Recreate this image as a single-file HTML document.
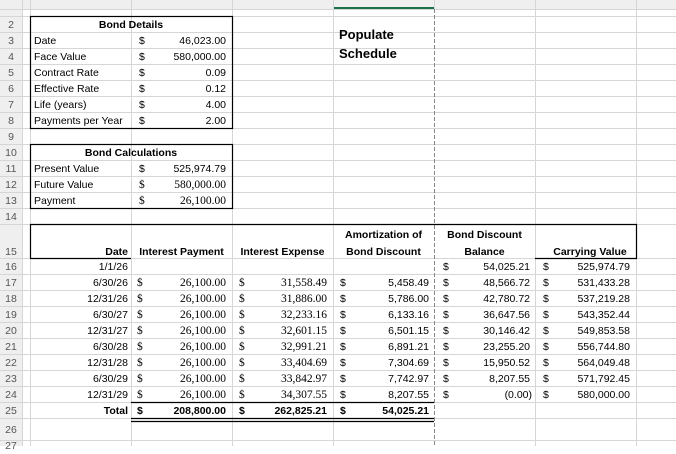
<!DOCTYPE html>
<html><head><meta charset="utf-8"><style>
body{margin:0;width:676px;height:446px;overflow:hidden;background:#fff;font-family:"Liberation Sans",sans-serif;font-size:10.5px;color:#000;position:relative}
.c{position:absolute;height:16px;line-height:16px;white-space:nowrap}
.r{text-align:right}.m{text-align:center}.b{font-weight:bold}
.s{font-family:"Liberation Serif",serif;font-size:11.5px}
.rn{position:absolute;left:0;width:22px;text-align:center;height:16px;line-height:16px;color:#555;font-size:10.5px}
</style></head><body>
<svg width="676" height="446" style="position:absolute;left:0;top:0">
<rect x="0" y="0" width="676" height="9" fill="#efefef"/>
<rect x="0" y="0" width="22" height="446" fill="#efefef"/>
<rect x="333" y="7" width="101" height="2" fill="#1e7145"/>
<g stroke="#d6d6d6" stroke-width="1">
<line x1="0" y1="9.5" x2="676" y2="9.5"/>
<line x1="0" y1="16.5" x2="676" y2="16.5"/>
<line x1="0" y1="32.5" x2="676" y2="32.5"/><line x1="0" y1="48.5" x2="676" y2="48.5"/><line x1="0" y1="64.5" x2="676" y2="64.5"/><line x1="0" y1="80.5" x2="676" y2="80.5"/><line x1="0" y1="96.5" x2="676" y2="96.5"/><line x1="0" y1="112.5" x2="676" y2="112.5"/><line x1="0" y1="128.5" x2="676" y2="128.5"/><line x1="0" y1="144.5" x2="676" y2="144.5"/><line x1="0" y1="160.5" x2="676" y2="160.5"/><line x1="0" y1="176.5" x2="676" y2="176.5"/><line x1="0" y1="192.5" x2="676" y2="192.5"/><line x1="0" y1="208.5" x2="676" y2="208.5"/><line x1="0" y1="224.5" x2="676" y2="224.5"/>
<line x1="0" y1="258.5" x2="676" y2="258.5"/><line x1="0" y1="274.5" x2="676" y2="274.5"/><line x1="0" y1="290.5" x2="676" y2="290.5"/><line x1="0" y1="306.5" x2="676" y2="306.5"/><line x1="0" y1="322.5" x2="676" y2="322.5"/><line x1="0" y1="338.5" x2="676" y2="338.5"/><line x1="0" y1="354.5" x2="676" y2="354.5"/><line x1="0" y1="370.5" x2="676" y2="370.5"/><line x1="0" y1="386.5" x2="676" y2="386.5"/><line x1="0" y1="402.5" x2="676" y2="402.5"/><line x1="0" y1="418.5" x2="676" y2="418.5"/><line x1="0" y1="440.5" x2="676" y2="440.5"/>
<line x1="22.5" y1="0" x2="22.5" y2="446"/><line x1="30.5" y1="0" x2="30.5" y2="446"/><line x1="131.5" y1="0" x2="131.5" y2="446"/><line x1="232.5" y1="0" x2="232.5" y2="446"/><line x1="333.5" y1="0" x2="333.5" y2="446"/><line x1="535.5" y1="0" x2="535.5" y2="446"/><line x1="636.5" y1="0" x2="636.5" y2="446"/>
</g>
<line x1="434.5" y1="0" x2="434.5" y2="9" stroke="#d6d6d6"/>
<line x1="434.5" y1="9" x2="434.5" y2="446" stroke="#888" stroke-dasharray="4,2"/>
<g stroke="#000" fill="none" stroke-width="1.2">
<rect x="30.5" y="16.5" width="202" height="112"/>
<rect x="30.5" y="144.5" width="202" height="64"/>
<path d="M30.5 258.5 V224.5 H636.5 V258.5"/>
<line x1="30" y1="258.5" x2="131" y2="258.5"/>
<line x1="535" y1="258.5" x2="637" y2="258.5"/>
<line x1="131" y1="402.5" x2="434" y2="402.5"/>
<line x1="131" y1="418.5" x2="434" y2="418.5"/>
<line x1="131" y1="421.5" x2="434" y2="421.5"/>
</g>
</svg>
<div class="rn" style="top:17px">2</div><div class="rn" style="top:33px">3</div><div class="rn" style="top:49px">4</div><div class="rn" style="top:65px">5</div><div class="rn" style="top:81px">6</div><div class="rn" style="top:97px">7</div><div class="rn" style="top:113px">8</div><div class="rn" style="top:129px">9</div><div class="rn" style="top:145px">10</div><div class="rn" style="top:161px">11</div><div class="rn" style="top:177px">12</div><div class="rn" style="top:193px">13</div><div class="rn" style="top:209px">14</div><div class="rn" style="top:244px">15</div>
<div class="rn" style="top:259px">16</div><div class="rn" style="top:275px">17</div><div class="rn" style="top:291px">18</div><div class="rn" style="top:307px">19</div><div class="rn" style="top:323px">20</div><div class="rn" style="top:339px">21</div><div class="rn" style="top:355px">22</div><div class="rn" style="top:371px">23</div><div class="rn" style="top:387px">24</div><div class="rn" style="top:403px">25</div><div class="rn" style="top:422px">26</div><div class="rn" style="top:438px">27</div>

<div class="c b m" style="left:30px;width:202px;top:17px">Bond Details</div>
<div class="c" style="left:34px;top:33px">Date</div><div class="c" style="left:139px;top:33px">$</div><div class="c r" style="left:140px;width:86px;top:33px">46,023.00</div>
<div class="c" style="left:34px;top:49px">Face Value</div><div class="c" style="left:139px;top:49px">$</div><div class="c r" style="left:140px;width:86px;top:49px">580,000.00</div>
<div class="c" style="left:34px;top:65px">Contract Rate</div><div class="c" style="left:139px;top:65px">$</div><div class="c r" style="left:140px;width:86px;top:65px">0.09</div>
<div class="c" style="left:34px;top:81px">Effective Rate</div><div class="c" style="left:139px;top:81px">$</div><div class="c r" style="left:140px;width:86px;top:81px">0.12</div>
<div class="c" style="left:34px;top:97px">Life (years)</div><div class="c" style="left:139px;top:97px">$</div><div class="c r" style="left:140px;width:86px;top:97px">4.00</div>
<div class="c" style="left:34px;top:113px">Payments per Year</div><div class="c" style="left:139px;top:113px">$</div><div class="c r" style="left:140px;width:86px;top:113px">2.00</div>

<div class="c b m" style="left:30px;width:202px;top:145px">Bond Calculations</div>
<div class="c" style="left:34px;top:161px">Present Value</div><div class="c" style="left:139px;top:161px">$</div><div class="c r" style="left:140px;width:86px;top:161px">525,974.79</div>
<div class="c" style="left:34px;top:177px">Future Value</div><div class="c s" style="left:139px;top:177px">$</div><div class="c r s" style="left:140px;width:86px;top:177px">580,000.00</div>
<div class="c" style="left:34px;top:193px">Payment</div><div class="c s" style="left:139px;top:193px">$</div><div class="c r s" style="left:140px;width:86px;top:193px">26,100.00</div>

<div class="c b" style="left:339px;top:27px;font-size:13px">Populate</div>
<div class="c b" style="left:339px;top:46px;font-size:13px">Schedule</div>

<div class="c b r" style="left:30px;width:98px;top:244px">Date</div>
<div class="c b m" style="left:131px;width:101px;top:244px">Interest Payment</div>
<div class="c b m" style="left:232px;width:101px;top:244px">Interest Expense</div>
<div class="c b m" style="left:333px;width:101px;top:227px">Amortization of</div>
<div class="c b m" style="left:333px;width:101px;top:244px">Bond Discount</div>
<div class="c b m" style="left:434px;width:101px;top:227px">Bond Discount</div>
<div class="c b m" style="left:434px;width:101px;top:244px">Balance</div>
<div class="c b m" style="left:535px;width:110px;top:244px">Carrying Value</div>

<div class="c r" style="left:30px;width:98px;top:259px">1/1/26</div>
<div class="c" style="left:443px;top:259px">$</div><div class="c r" style="left:440px;width:90px;top:259px">54,025.21</div>
<div class="c" style="left:543px;top:259px">$</div><div class="c r" style="left:540px;width:90px;top:259px">525,974.79</div>

<div style="position:absolute;left:0;top:275px">
<div class="c r" style="left:30px;width:98px;top:0">6/30/26</div><div class="c s" style="left:137px;top:0">$</div><div class="c r s" style="left:140px;width:86px;top:0">26,100.00</div><div class="c s" style="left:239px;top:0">$</div><div class="c r s" style="left:240px;width:87px;top:0">31,558.49</div><div class="c" style="left:340px;top:0">$</div><div class="c r" style="left:340px;width:89px;top:0">5,458.49</div><div class="c" style="left:443px;top:0">$</div><div class="c r" style="left:440px;width:90px;top:0">48,566.72</div><div class="c" style="left:543px;top:0">$</div><div class="c r" style="left:540px;width:90px;top:0">531,433.28</div>
<div class="c r" style="left:30px;width:98px;top:16px">12/31/26</div><div class="c s" style="left:137px;top:16px">$</div><div class="c r s" style="left:140px;width:86px;top:16px">26,100.00</div><div class="c s" style="left:239px;top:16px">$</div><div class="c r s" style="left:240px;width:87px;top:16px">31,886.00</div><div class="c" style="left:340px;top:16px">$</div><div class="c r" style="left:340px;width:89px;top:16px">5,786.00</div><div class="c" style="left:443px;top:16px">$</div><div class="c r" style="left:440px;width:90px;top:16px">42,780.72</div><div class="c" style="left:543px;top:16px">$</div><div class="c r" style="left:540px;width:90px;top:16px">537,219.28</div>
<div class="c r" style="left:30px;width:98px;top:32px">6/30/27</div><div class="c s" style="left:137px;top:32px">$</div><div class="c r s" style="left:140px;width:86px;top:32px">26,100.00</div><div class="c s" style="left:239px;top:32px">$</div><div class="c r s" style="left:240px;width:87px;top:32px">32,233.16</div><div class="c" style="left:340px;top:32px">$</div><div class="c r" style="left:340px;width:89px;top:32px">6,133.16</div><div class="c" style="left:443px;top:32px">$</div><div class="c r" style="left:440px;width:90px;top:32px">36,647.56</div><div class="c" style="left:543px;top:32px">$</div><div class="c r" style="left:540px;width:90px;top:32px">543,352.44</div>
<div class="c r" style="left:30px;width:98px;top:48px">12/31/27</div><div class="c s" style="left:137px;top:48px">$</div><div class="c r s" style="left:140px;width:86px;top:48px">26,100.00</div><div class="c s" style="left:239px;top:48px">$</div><div class="c r s" style="left:240px;width:87px;top:48px">32,601.15</div><div class="c" style="left:340px;top:48px">$</div><div class="c r" style="left:340px;width:89px;top:48px">6,501.15</div><div class="c" style="left:443px;top:48px">$</div><div class="c r" style="left:440px;width:90px;top:48px">30,146.42</div><div class="c" style="left:543px;top:48px">$</div><div class="c r" style="left:540px;width:90px;top:48px">549,853.58</div>
<div class="c r" style="left:30px;width:98px;top:64px">6/30/28</div><div class="c s" style="left:137px;top:64px">$</div><div class="c r s" style="left:140px;width:86px;top:64px">26,100.00</div><div class="c s" style="left:239px;top:64px">$</div><div class="c r s" style="left:240px;width:87px;top:64px">32,991.21</div><div class="c" style="left:340px;top:64px">$</div><div class="c r" style="left:340px;width:89px;top:64px">6,891.21</div><div class="c" style="left:443px;top:64px">$</div><div class="c r" style="left:440px;width:90px;top:64px">23,255.20</div><div class="c" style="left:543px;top:64px">$</div><div class="c r" style="left:540px;width:90px;top:64px">556,744.80</div>
<div class="c r" style="left:30px;width:98px;top:80px">12/31/28</div><div class="c s" style="left:137px;top:80px">$</div><div class="c r s" style="left:140px;width:86px;top:80px">26,100.00</div><div class="c s" style="left:239px;top:80px">$</div><div class="c r s" style="left:240px;width:87px;top:80px">33,404.69</div><div class="c" style="left:340px;top:80px">$</div><div class="c r" style="left:340px;width:89px;top:80px">7,304.69</div><div class="c" style="left:443px;top:80px">$</div><div class="c r" style="left:440px;width:90px;top:80px">15,950.52</div><div class="c" style="left:543px;top:80px">$</div><div class="c r" style="left:540px;width:90px;top:80px">564,049.48</div>
<div class="c r" style="left:30px;width:98px;top:96px">6/30/29</div><div class="c s" style="left:137px;top:96px">$</div><div class="c r s" style="left:140px;width:86px;top:96px">26,100.00</div><div class="c s" style="left:239px;top:96px">$</div><div class="c r s" style="left:240px;width:87px;top:96px">33,842.97</div><div class="c" style="left:340px;top:96px">$</div><div class="c r" style="left:340px;width:89px;top:96px">7,742.97</div><div class="c" style="left:443px;top:96px">$</div><div class="c r" style="left:440px;width:90px;top:96px">8,207.55</div><div class="c" style="left:543px;top:96px">$</div><div class="c r" style="left:540px;width:90px;top:96px">571,792.45</div>
<div class="c r" style="left:30px;width:98px;top:112px">12/31/29</div><div class="c s" style="left:137px;top:112px">$</div><div class="c r s" style="left:140px;width:86px;top:112px">26,100.00</div><div class="c s" style="left:239px;top:112px">$</div><div class="c r s" style="left:240px;width:87px;top:112px">34,307.55</div><div class="c" style="left:340px;top:112px">$</div><div class="c r" style="left:340px;width:89px;top:112px">8,207.55</div><div class="c" style="left:443px;top:112px">$</div><div class="c r" style="left:440px;width:92px;top:112px">(0.00)</div><div class="c" style="left:543px;top:112px">$</div><div class="c r" style="left:540px;width:90px;top:112px">580,000.00</div>
<div class="c r b" style="left:30px;width:98px;top:128px">Total</div><div class="c b" style="left:137px;top:128px">$</div><div class="c r b" style="left:140px;width:86px;top:128px">208,800.00</div><div class="c b" style="left:239px;top:128px">$</div><div class="c r b" style="left:240px;width:87px;top:128px">262,825.21</div><div class="c b" style="left:340px;top:128px">$</div><div class="c r b" style="left:340px;width:89px;top:128px">54,025.21</div>
</div>
</body></html>
